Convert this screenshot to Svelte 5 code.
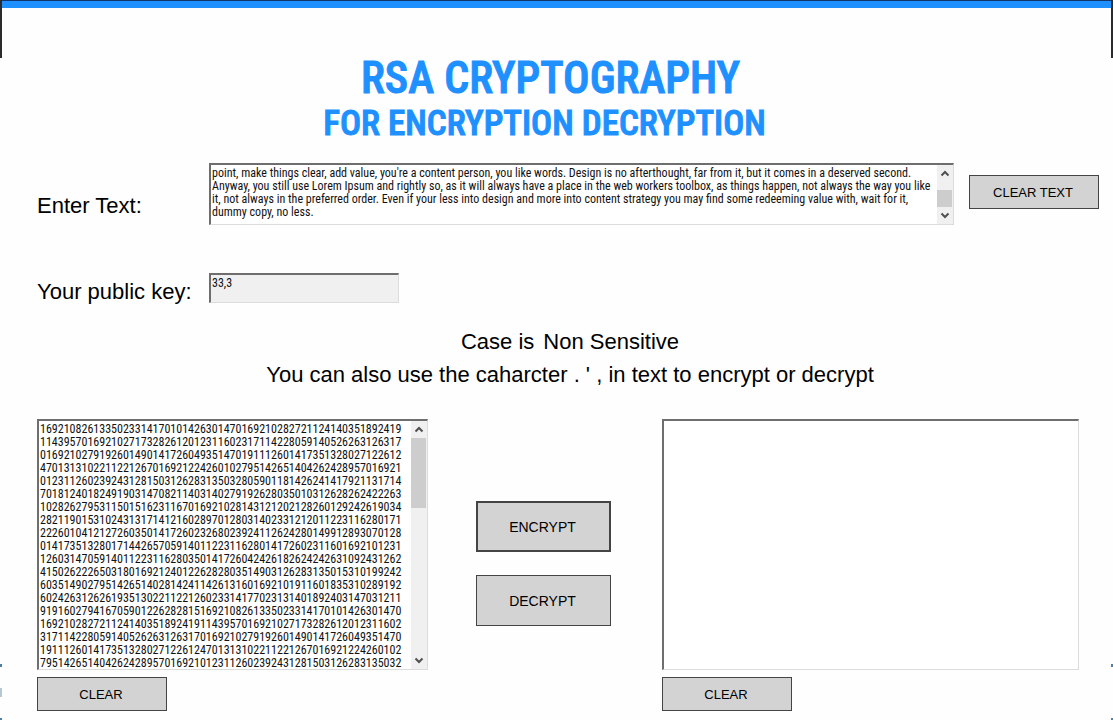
<script>
  let message = $state(
    "point, make things clear, add value, you're a content person, you like words. Design is no afterthought, far from it, but it comes in a deserved second.\n" +
    "Anyway, you still use Lorem Ipsum and rightly so, as it will always have a place in the web workers toolbox, as things happen, not always the way you like\n" +
    "it, not always in the preferred order. Even if your less into design and more into content strategy you may find some redeeming value with, wait for it,\n" +
    "dummy copy, no less."
  );
  let cipher = $state([
    '1692108261335023314170101426301470169210282721124140351892419',
    '1143957016921027173282612012311602317114228059140526263126317',
    '0169210279192601490141726049351470191112601417351328027122612',
    '4701313102211221267016921224260102795142651404262428957016921',
    '0123112602392431281503126283135032805901181426241417921131714',
    '7018124018249190314708211403140279192628035010312628262422263',
    '1028262795311501516231167016921028143121202128260129242619034',
    '2821190153102431317141216028970128031402331212011223116280171',
    '2226010412127260350141726023268023924112624280149912893070128',
    '0141735132801714426570591401122311628014172602311601692101231',
    '1260314705914011223116280350141726042426182624242631092431262',
    '4150262226503180169212401226282803514903126283135015310199242',
    '6035149027951426514028142411426131601692101911601835310289192',
    '6024263126261935130221122126023314177023131401892403147031211',
    '9191602794167059012262828151692108261335023314170101426301470',
    '1692102827211241403518924191143957016921027173282612012311602',
    '3171142280591405262631263170169210279192601490141726049351470',
    '1911126014173513280271226124701313102211221267016921224260102',
    '7951426514042624289570169210123112602392431281503126283135032'
  ].join('\n'));
  let plain = $state('');
</script>

{#snippet arrow(down)}
  <svg class="arrow" viewBox="0 0 16 17" aria-hidden="true">
    <path d={down ? 'M4.5 6.5 8 10l3.5-3.5' : 'M4.5 10.5 8 7l3.5 3.5'} fill="none" stroke="#505050" stroke-width="2" />
  </svg>
{/snippet}

<div class="page">
  <div class="topbar"></div>
  <span class="edge left dark"></span>
  <span class="edge right dark"></span>
  <span class="edge left mark upper"></span>
  <span class="edge right mark upper"></span>
  <span class="edge left mark letter"></span>
  <span class="edge left mark lower"></span>
  <span class="edge right mark lower"></span>

  <header>
    <h1>RSA CRYPTOGRAPHY</h1>
    <h2>FOR ENCRYPTION DECRYPTION</h2>
  </header>

  <main>
    <div class="row entry">
      <label for="message">Enter Text:</label>
      <div class="field short">
        <textarea id="message" bind:value={message} spellcheck="false"></textarea>
        <div class="scroll">
          {@render arrow(false)}
          <span class="track"><span class="thumb low"></span></span>
          {@render arrow(true)}
        </div>
      </div>
      <button type="button" onclick={() => (message = '')}>CLEAR TEXT</button>
    </div>

    <div class="row key">
      <label for="key">Your public key:</label>
      <input id="key" type="text" value="33,3" readonly />
    </div>

    <div class="notes">
      <p><span>Case is</span><span>Non Sensitive</span></p>
      <p>You can also use the caharcter . ' , in text to encrypt or decrypt</p>
    </div>

    <div class="work">
      <div class="side">
        <div class="field tall">
          <textarea aria-label="Encrypted text" bind:value={cipher} spellcheck="false"></textarea>
          <div class="scroll">
            {@render arrow(false)}
            <span class="track"><span class="thumb high"></span></span>
            {@render arrow(true)}
          </div>
        </div>
        <button type="button" onclick={() => (cipher = '')}>CLEAR</button>
      </div>
      <div class="actions">
        <button type="button" class="default">ENCRYPT</button>
        <button type="button">DECRYPT</button>
      </div>
      <div class="side">
        <div class="field tall">
          <textarea aria-label="Decrypted text" bind:value={plain} spellcheck="false"></textarea>
        </div>
        <button type="button" onclick={() => (plain = '')}>CLEAR</button>
      </div>
    </div>
  </main>
</div>

<style>
  :global(body) {
    margin: 0;
    background: #fefefe;
  }
  .page, .page * {
    box-sizing: border-box;
  }
  .page {
    position: relative;
    font-family: 'Liberation Sans', Arial, sans-serif;
    color: #000;
    padding-bottom: 9px;
  }
  .topbar {
    height: 8px;
    background: #1e90ff;
    border-top: 1px solid #12366b;
  }
  .edge {
    position: absolute;
    width: 2px;
  }
  .left { left: 0; }
  .right { right: 0; }
  .dark {
    top: 0;
    height: 58px;
    background: #2b2b2e;
  }
  .mark {
    height: 3px;
    background: #4f7fa6;
  }
  .upper { top: 664px; }
  .letter {
    top: 688px;
    height: 9px;
    background: #b7c6d8;
  }
  .lower {
    top: 718px;
    height: 2px;
  }
  header {
    padding: 46px 24px 0 0;
    text-align: center;
    color: #1e90ff;
  }
  h1, h2 {
    margin: 0;
    font-family: 'Roboto Condensed', 'Noto Sans CJK SC', sans-serif;
    font-weight: 500;
    white-space: nowrap;
    -webkit-text-stroke: 1px #1e90ff;
    stroke-linejoin: round;
  }
  h1 {
    font-size: 44px;
    line-height: 48px;
    padding-left: 12px;
  }
  h2 {
    font-size: 35px;
    line-height: 44px;
  }
  main {
    padding: 17px 14px 0 37px;
  }
  .row {
    display: grid;
    grid-template-columns: 172px 1fr 130px;
  }
  label {
    font-size: 22px;
    line-height: 38px;
    align-self: end;
    white-space: nowrap;
  }
  .entry button {
    margin: 12px 0 0 15px;
  }
  .entry {
    grid-template-columns: 172px 1fr 145px;
  }
  .field {
    display: flex;
    background: #fff;
    border: 1px solid #dcdcdc;
    border-top: 2px solid #6e6e6e;
    border-left: 2px solid #6e6e6e;
  }
  .short { height: 62px; }
  .tall { height: 251px; }
  textarea {
    flex: 1;
    min-width: 0;
    margin: 0;
    padding: 2px 0 0 1px;
    border: 0;
    outline: 0;
    resize: none;
    overflow: hidden;
    white-space: pre;
    background: transparent;
    color: #111;
    font-family: 'Roboto Condensed', 'Liberation Sans', sans-serif;
    font-size: 12px;
    line-height: 13px;
  }
  .scroll {
    display: flex;
    flex-direction: column;
    width: 16px;
    background: #f0f0f0;
  }
  .arrow {
    display: block;
    width: 16px;
    height: 17px;
    flex: none;
  }
  .track {
    display: flex;
    flex-direction: column;
    flex: 1;
    padding: 0 1px 0 0;
  }
  .thumb { background: #cdcdcd; }
  .low {
    height: 17px;
    margin-top: 8px;
  }
  .high { height: 70px; }
  input {
    width: 190px;
    height: 30px;
    padding: 0 1px 11px;
    border: 1px solid #dcdcdc;
    border-top: 2px solid #6e6e6e;
    border-left: 2px solid #6e6e6e;
    outline: 0;
    border-radius: 0;
    background: #f0f0f0;
    color: #111;
    font-family: 'Roboto Condensed', 'Liberation Sans', sans-serif;
    font-size: 12px;
    line-height: 14px;
  }
  .key { margin-top: 48px; }
  .notes {
    padding: 14px 0 0 4px;
    text-align: center;
  }
  p {
    display: flex;
    justify-content: center;
    gap: 9px;
    margin: 0;
    font-size: 22px;
    line-height: 33px;
  }
  .work {
    display: grid;
    grid-template-columns: 391fr 234px 417fr;
    padding: 28px 20px 0 0;
  }
  button {
    display: block;
    width: 130px;
    height: 34px;
    padding: 0 2px 0 0;
    border: 1px solid #444;
    border-radius: 0;
    background: #d3d3d3;
    color: #000;
    font-family: 'Liberation Sans', Arial, sans-serif;
    font-size: 13px;
  }
  .side { min-width: 0; }
  .side button { margin-top: 7px; }
  .actions {
    display: flex;
    flex-direction: column;
    gap: 23px;
    padding: 82px 0 0 48px;
  }
  .actions button {
    width: 135px;
    height: 51px;
    font-size: 14px;
  }
  .actions .default { border-width: 2px; }
</style>
